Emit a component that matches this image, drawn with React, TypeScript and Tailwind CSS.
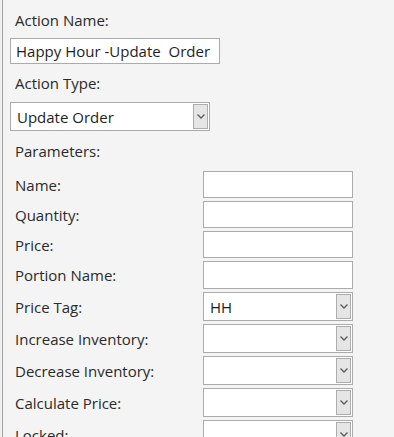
import React from 'react';

const font = { fontFamily: '"Open Sans", "Noto Sans", sans-serif' };

function Chevron() {
  return (
    <div className="flex h-full w-[15px] items-center justify-center border border-[#adadad] bg-[#e5e5e5]">
      <svg width="8" height="5" viewBox="0 0 8 5" fill="none">
        <path d="M0.5 0.5 L4 4 L7.5 0.5" stroke="#5a5a5a" strokeWidth="1.3" />
      </svg>
    </div>
  );
}

function TextBox({ value, className }: { value?: string; className: string }) {
  return (
    <div className={`flex items-center border border-[#ababab] bg-white text-[#1e1e1e] ${className}`}>
      {value}
    </div>
  );
}

function Select({ value, className, textPad }: { value?: string; className: string; textPad: string }) {
  return (
    <div className={`flex items-center border border-[#ababab] bg-white p-px text-[#1e1e1e] ${className}`}>
      <div className={`flex-1 whitespace-nowrap ${textPad}`}>{value}</div>
      <Chevron />
    </div>
  );
}

const params: { label: string; kind: 'text' | 'select'; value?: string; h: string }[] = [
  { label: 'Name:', kind: 'text', h: 'h-[27px]' },
  { label: 'Quantity:', kind: 'text', h: 'h-[27px]' },
  { label: 'Price:', kind: 'text', h: 'h-[27px]' },
  { label: 'Portion Name:', kind: 'text', h: 'h-[28px]' },
  { label: 'Price Tag:', kind: 'select', value: 'HH', h: 'h-[29px]' },
  { label: 'Increase Inventory:', kind: 'select', h: 'h-[29px]' },
  { label: 'Decrease Inventory:', kind: 'select', h: 'h-[29px]' },
  { label: 'Calculate Price:', kind: 'select', h: 'h-[29px]' },
  { label: 'Locked:', kind: 'select', h: 'h-[29px]' },
];

export default function App() {
  return (
    <div className="h-[437px] w-[394px] overflow-hidden bg-[#f0f0f0]" style={font}>
      <div className="ml-[2px] h-full border-l border-[#a0a0a0] bg-[#f4f4f4] pl-[7px] text-[15px] leading-[20px] text-[#2a2a2a]">
        <div className="pl-[5px] pt-[10px]">Action Name:</div>
        <TextBox value="Happy Hour -Update  Order" className="mt-[8px] h-[26px] w-[210px] whitespace-pre pl-[5px]" />
        <div className="pl-[5px] pt-[9px]">Action Type:</div>
        <Select value="Update Order" className="mt-[9px] h-[29px] w-[200px]" textPad="pl-[5px]" />
        <div className="pl-[5px] pt-[10px]">Parameters:</div>
        <div className="mt-[10px] flex flex-col gap-[3px]">
          {params.map((p) => (
            <div key={p.label} className="flex items-center">
              <div className="w-[193px] shrink-0 pl-[5px]">{p.label}</div>
              {p.kind === 'text' ? (
                <TextBox className={`${p.h} w-[150px]`} />
              ) : (
                <Select value={p.value} className={`${p.h} w-[150px]`} textPad="pl-[5px]" />
              )}
            </div>
          ))}
        </div>
      </div>
    </div>
  );
}
